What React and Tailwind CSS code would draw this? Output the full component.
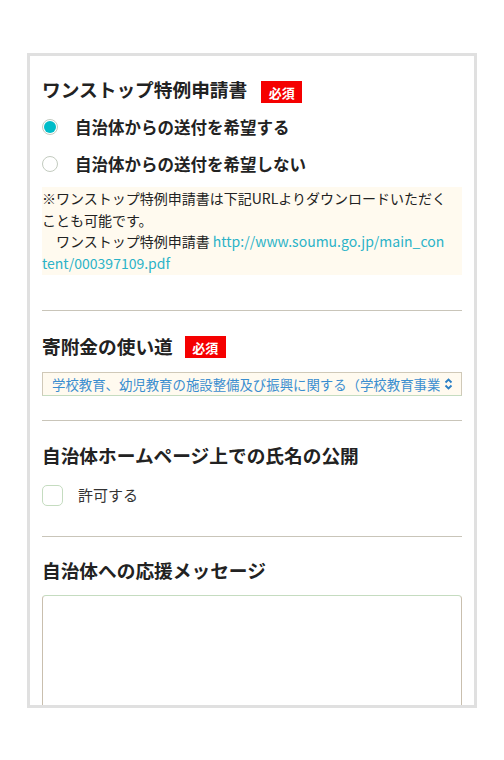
import React, { useState } from 'react';

const font = { fontFamily: '"Noto Sans CJK JP", "Noto Sans", sans-serif' };

function Badge({ className = '' }) {
  return (
    <span className={`inline-flex items-center justify-center w-[41px] h-[22px] bg-[#f50000] text-white text-[13px] font-bold leading-none ${className}`}>
      必須
    </span>
  );
}

function Radio({ checked, label, onClick }) {
  return (
    <button type="button" onClick={onClick} className="flex items-center h-[24px] text-left">
      <span className="w-[16px] h-[16px] rounded-full border border-[#c3cbbf] bg-white flex items-center justify-center shrink-0">
        {checked && <span className="w-[12px] h-[12px] rounded-full bg-[#00bcc8]" />}
      </span>
      <span className="ml-[17px] text-[16.5px] font-bold text-[#222]">{label}</span>
    </button>
  );
}

function Divider({ className = '' }) {
  return <div className={`h-px bg-[#c9c5b9] ${className}`} />;
}

export default function App() {
  const [send, setSend] = useState(true);
  const [allow, setAllow] = useState(false);

  return (
    <div className="min-h-[760px] bg-white pt-[53px]" style={font}>
      <div className="ml-[27px] w-[450px] h-[655px] border-[3px] border-[#e0e0e0] overflow-hidden px-[12px] pt-[20px]">
        {/* ワンストップ特例申請書 */}
        <div className="flex items-start">
          <h3 className="text-[18.7px] leading-[26px] font-bold text-[#222]">ワンストップ特例申請書</h3>
          <Badge className="ml-[14px] mt-[5px]" />
        </div>
        <div className="mt-[12px] flex flex-col gap-[13px]">
          <Radio checked={send} onClick={() => setSend(true)} label="自治体からの送付を希望する" />
          <Radio checked={!send} onClick={() => setSend(false)} label="自治体からの送付を希望しない" />
        </div>
        <div className="mt-[11px] bg-[#fffaef] py-[1px] text-[14px] leading-[21.5px] text-[#222] whitespace-nowrap">
          ※ワンストップ特例申請書は下記URLよりダウンロードいただく<br />
          ことも可能です。<br />
          {'\u3000'}ワンストップ特例申請書 <a href="#" className="text-[#2bb3c8]">http://www.soumu.go.jp/main_con<br />tent/000397109.pdf</a>
        </div>

        <Divider className="mt-[35px]" />

        {/* 寄附金の使い道 */}
        <div className="mt-[22px] flex items-start">
          <h3 className="text-[18.7px] leading-[26px] font-bold text-[#222]">寄附金の使い道</h3>
          <Badge className="ml-[12px] mt-[3px]" />
        </div>
        <div className="mt-[13px] h-[24px] flex items-center bg-[#fffaef] border border-[#d0c9b8] border-b-[#c5dcc0] pl-[9px] pr-[8px]">
          <span className="flex-1 overflow-hidden whitespace-nowrap text-[13.4px] text-[#3a8ed0]">
            学校教育、幼児教育の施設整備及び振興に関する（学校教育事業）
          </span>
          <svg width="9" height="12" viewBox="0 0 9 12" className="ml-[4px] shrink-0">
            <path d="M1.5 4.5 L4.5 1.5 L7.5 4.5 M1.5 7.5 L4.5 10.5 L7.5 7.5" fill="none" stroke="#2a7fc4" strokeWidth="1.8" />
          </svg>
        </div>

        <Divider className="mt-[24px]" />

        {/* 氏名の公開 */}
        <h3 className="mt-[21px] text-[18.7px] leading-[26px] font-bold text-[#222]">自治体ホームページ上での氏名の公開</h3>
        <button type="button" onClick={() => setAllow(!allow)} className="mt-[16px] flex items-center">
          <span className="w-[21px] h-[21px] rounded-[5px] border border-[#c5dcc0] bg-white flex items-center justify-center">
            {allow && <span className="text-[#00bcc8] text-[14px] leading-none">✓</span>}
          </span>
          <span className="ml-[15px] text-[15px] text-[#333]">許可する</span>
        </button>

        <Divider className="mt-[29px]" />

        {/* 応援メッセージ */}
        <h3 className="mt-[20px] text-[18.7px] leading-[26px] font-bold text-[#222]">自治体への応援メッセージ</h3>
        <textarea className="mt-[12px] block w-full h-[160px] rounded-[4px] border border-[#c9bfae] border-t-[#c5dcc0] bg-white resize-none outline-none" />
      </div>
    </div>
  );
}
